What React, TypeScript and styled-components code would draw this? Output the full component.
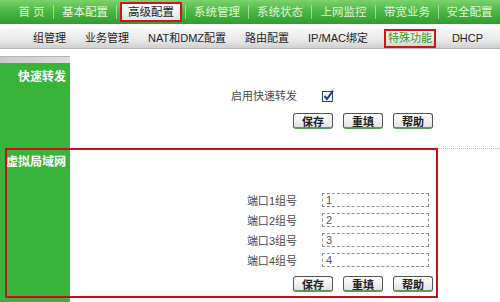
import styled, { createGlobalStyle } from "styled-components";

const GlobalStyle = createGlobalStyle`
  html, body {
    margin: 0;
    padding: 0;
    background: #ffffff;
  }
  body {
    font-family: "Liberation Sans", "Noto Sans CJK SC", sans-serif;
    font-size: 11px;
    color: #444;
  }
`;

const topItems = [
  { title: "首 页", width: 43 },
  { title: "基本配置", width: 63 },
  { title: "高级配置", width: 69, active: true },
  { title: "系统管理", width: 63 },
  { title: "系统状态", width: 63 },
  { title: "上网监控", width: 64 },
  { title: "带宽业务", width: 63 },
  { title: "安全配置", width: 62 },
];

const subItems = [
  { title: "组管理" },
  { title: "业务管理" },
  { title: "NAT和DMZ配置" },
  { title: "路由配置" },
  { title: "IP/MAC绑定" },
  { title: "特殊功能", active: true },
  { title: "DHCP" },
];

const ports = ["1", "2", "3", "4"];

const CheckIcon = () => (
  <svg width="13" height="13" viewBox="0 0 13 13">
    <rect x="0.5" y="2.5" width="10" height="10" fill="#fdfdfd" stroke="#2b3f6e" />
    <path d="M2.5 7 L5 10 L11 1.5" fill="none" stroke="#1c3c9c" strokeWidth="2" />
  </svg>
);

const ButtonRow = () => (
  <Buttons>
    <FormButton>保存</FormButton>
    <FormButton>重填</FormButton>
    <FormButton>帮助</FormButton>
  </Buttons>
);

const App = () => {
  return (
    <>
      <GlobalStyle />
      <Page>
        <TopNav>
          {topItems.map((item, i) => (
            <TopItem key={item.title} $width={item.width} $first={i === 0}>
              <TopLabel $active={item.active}>{item.title}</TopLabel>
            </TopItem>
          ))}
        </TopNav>
        <SubNav>
          {subItems.map((item) => (
            <SubLabel key={item.title} $active={item.active}>
              {item.title}
            </SubLabel>
          ))}
        </SubNav>

        <CapRow>
          <SideCap />
          <div />
        </CapRow>

        <Section $height={85}>
          <SideLabel>快速转发</SideLabel>
          <Content $top={22}>
            <FormRow>
              <FieldLabel>启用快速转发</FieldLabel>
              <CheckIcon />
            </FormRow>
            <ButtonsWrap $gap={8}>
              <ButtonRow />
            </ButtonsWrap>
          </Content>
        </Section>

        <Section $height={154}>
          <SideLabel>虚拟局域网</SideLabel>
          <Content $top={41} $dotted>
            {ports.map((p) => (
              <FormRow key={p}>
                <FieldLabel>端口{p}组号</FieldLabel>
                <TextBox>{p}</TextBox>
              </FormRow>
            ))}
            <ButtonsWrap $gap={6}>
              <ButtonRow />
            </ButtonsWrap>
          </Content>
          <Highlight />
        </Section>
      </Page>
    </>
  );
};

export default App;

const Page = styled.div`
  width: 500px;
  height: 302px;
  overflow: hidden;
  background: #fff;
`;

const TopNav = styled.div`
  display: flex;
  align-items: center;
  height: 24px;
  padding-left: 10px;
  background: linear-gradient(#7dd26c 0%, #4bb845 45%, #2f9e30 100%);
`;

const TopItem = styled.div<{ $width: number; $first?: boolean }>`
  display: flex;
  justify-content: center;
  align-items: center;
  width: ${(p) => p.$width}px;
  height: 14px;
  border-left: ${(p) => (p.$first ? "none" : "1px solid rgba(220, 245, 210, 0.55)")};
  box-sizing: border-box;
`;

const TopLabel = styled.span<{ $active?: boolean }>`
  font-size: 11.5px;
  line-height: 14px;
  color: ${(p) => (p.$active ? "#1a1a1a" : "#e4f5da")};
  padding: ${(p) => (p.$active ? "1px 6px" : "0")};
  border: ${(p) => (p.$active ? "2px solid #d0141c" : "none")};
  background: ${(p) => (p.$active ? "linear-gradient(#ffffff, #e4e4e4)" : "none")};
  white-space: pre;
`;

const SubNav = styled.div`
  display: flex;
  align-items: center;
  gap: 19px;
  height: 20px;
  margin-top: 4px;
  padding-left: 33px;
  background: linear-gradient(#f8f8f8 0%, #e8e8e8 60%, #cfcfcf 100%);
  border-bottom: 1px solid #b8b8b8;
`;

const SubLabel = styled.span<{ $active?: boolean }>`
  font-size: 11px;
  line-height: 13px;
  color: ${(p) => (p.$active ? "#2c9a2c" : "#1e1e1e")};
  padding: ${(p) => (p.$active ? "1px 2px" : "0")};
  border: ${(p) => (p.$active ? "2px solid #d0141c" : "none")};
  margin: ${(p) => (p.$active ? "0 -3px" : "0")};
  white-space: nowrap;
`;

const CapRow = styled.div`
  display: grid;
  grid-template-columns: 70px 1fr;
  margin-top: 7px;
`;

const SideCap = styled.div`
  height: 7px;
  background: linear-gradient(90deg, #c9c9c9, #dedede);
  border-top: 1px solid #b5b5b5;
  box-sizing: border-box;
`;

const Section = styled.div<{ $height: number }>`
  position: relative;
  display: grid;
  grid-template-columns: 70px 1fr;
  height: ${(p) => p.$height}px;
`;

const SideLabel = styled.div`
  background: #38b43a;
  color: #ffffff;
  font-family: "Noto Sans CJK SC", sans-serif;
  font-weight: bold;
  font-size: 12px;
  line-height: 16px;
  text-align: right;
  padding: 5px 4px 0 0;
`;

const Content = styled.div<{ $top: number; $dotted?: boolean }>`
  display: flex;
  flex-direction: column;
  padding-top: ${(p) => p.$top}px;
  border-top: ${(p) => (p.$dotted ? "1px dotted #a9c7a9" : "none")};
`;

const FormRow = styled.div`
  display: grid;
  grid-template-columns: 252px 108px;
  align-items: center;
  height: 20px;
`;

const FieldLabel = styled.span`
  text-align: right;
  padding-right: 25px;
  color: #4a4a4a;
  font-size: 11px;
`;

const TextBox = styled.div`
  width: 107px;
  height: 14px;
  box-sizing: border-box;
  border: 1px dashed #8f8f8f;
  padding-left: 3px;
  font-size: 11px;
  line-height: 12px;
  color: #555;
`;

const ButtonsWrap = styled.div<{ $gap: number }>`
  margin-top: ${(p) => p.$gap}px;
  padding-left: 223px;
`;

const Buttons = styled.div`
  display: flex;
  gap: 10px;
`;

const FormButton = styled.div`
  display: flex;
  justify-content: center;
  align-items: center;
  width: 40px;
  height: 16px;
  box-sizing: border-box;
  border: 1px solid #555;
  border-bottom: 2px solid #5a9a5a;
  border-radius: 3px;
  background: linear-gradient(#ffffff, #e2e2e2);
  font-family: "Noto Sans CJK SC", sans-serif;
  font-size: 11px;
  font-weight: bold;
  color: #222;
`;

const Highlight = styled.div`
  position: absolute;
  left: 5px;
  top: 0;
  width: 433px;
  height: 150px;
  box-sizing: border-box;
  border: 2px solid #c8101a;
  pointer-events: none;
`;
